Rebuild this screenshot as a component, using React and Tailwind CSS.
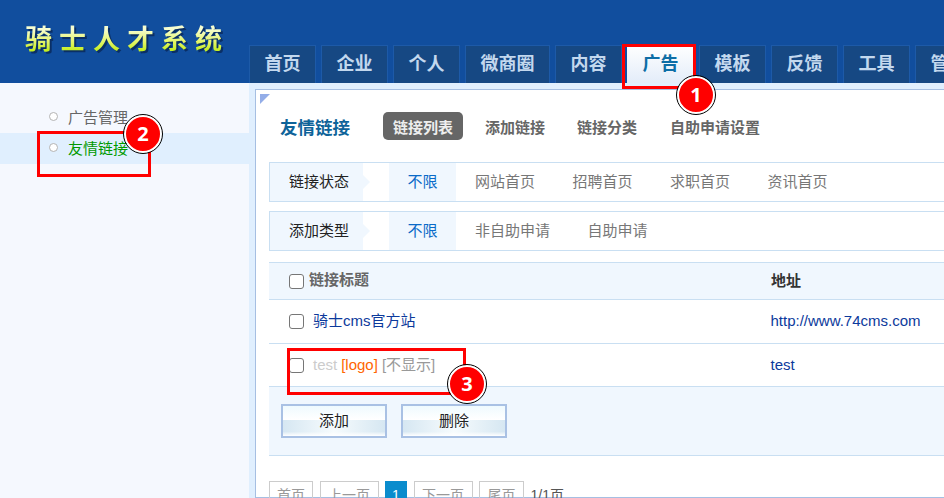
import React from 'react';

const navItems = [
  { label: '首页', width: 'w-[67px]' },
  { label: '企业', width: 'w-[67px]' },
  { label: '个人', width: 'w-[67px]' },
  { label: '微商圈', width: 'w-[85px]' },
  { label: '内容', width: 'w-[67px]' },
  { label: '广告', width: 'w-[67px]', active: true },
  { label: '模板', width: 'w-[67px]' },
  { label: '反馈', width: 'w-[67px]' },
  { label: '工具', width: 'w-[67px]' },
  { label: '管理', width: 'w-[67px]' },
];

function FilterRow({ title, options }) {
  return (
    <div className="flex h-[40px] w-[700px] border border-[#c9dff2]">
      <div className="relative flex w-[93px] items-center bg-[#f0f7fe] pl-[19px] text-[15px] text-[#222]">
        {title}
        <span className="absolute left-full top-1/2 -mt-[7px] border-y-[7px] border-l-[7px] border-y-transparent border-l-[#f0f7fe]" />
      </div>
      <div className="ml-[26px] flex">
        {options.map((o, i) => (
          <div
            key={o}
            className={i === 0
              ? 'flex w-[67px] items-center justify-center bg-[#f0f7fe] text-[15px] text-[#0a6ac8]'
              : 'flex items-center pl-[19px] pr-[18.5px] text-[15px] text-[#777]'}
          >
            {o}
          </div>
        ))}
      </div>
    </div>
  );
}

function Check() {
  return <span className="block h-[15px] w-[15px] shrink-0 rounded-[3px] border border-[#767676] bg-white" />;
}

function Marker({ n, className }) {
  return (
    <div className={`absolute flex h-[38px] w-[38px] items-center justify-center rounded-full border-2 border-white bg-[#f00] font-['Open_Sans',sans-serif] text-[20px] font-bold text-white outline outline-1 outline-black ${className}`}>
      {n}
    </div>
  );
}

function GradButton({ children }) {
  return (
    <button className="flex h-[34px] w-[106px] items-center justify-center border-2 border-[#a9c1e4] bg-[linear-gradient(180deg,#effafe_0%,#ffffff_45%,transparent_46%,transparent_85%,#ffffff_100%),linear-gradient(90deg,#d6e7f2_0%,#f6fbfd_50%,#d6e7f2_100%)] text-[15px] text-[#222]">
      {children}
    </button>
  );
}

export default function App() {
  return (
    <div className="relative h-[498px] w-[944px] overflow-hidden bg-white font-['Liberation_Sans','Noto_Sans_CJK_SC',sans-serif]">
      {/* header */}
      <div className="flex h-[83px] bg-[#114e9e]">
        <div className="w-[249px] shrink-0 pl-[25px] pt-[21px]">
          <span className="bg-[linear-gradient(180deg,#f6fdd0_15%,#e4f56a_55%,#c4ee22_85%)] bg-clip-text text-[27px] font-bold leading-[38px] tracking-[7px] text-transparent drop-shadow-[2px_2px_0_#0a2f66]">骑士人才系统</span>
        </div>
        <div className="flex items-end gap-[5px] overflow-hidden">
          {navItems.map((item) => (
            <div
              key={item.label}
              className={item.active
                ? `flex h-[38px] shrink-0 items-center justify-center bg-[linear-gradient(180deg,#ffffff,#e3ecf9)] text-[18px] font-bold text-[#0e6ea6] ${item.width}`
                : `flex h-[38px] shrink-0 items-center justify-center border border-b-0 border-[#1d5aa8] bg-[#164883] text-[18px] font-bold text-[#c3d8ee] ${item.width}`}
            >
              {item.label}
            </div>
          ))}
        </div>
      </div>

      <div className="flex h-[415px]">
        {/* sidebar */}
        <div className="w-[249px] shrink-0 bg-[#f5f8fe] pt-[19px] text-[15px]">
          <div className="flex h-[31px] items-center pl-[49px] pt-[2px] text-[#666]">
            <span className="-mt-[5px] mr-[10px] h-[9px] w-[9px] rounded-full border border-[#b4b4b4] bg-white" />
            广告管理
          </div>
          <div className="flex h-[31px] items-center bg-[#e0effe] pl-[49px] pt-[2px] text-[#009900]">
            <span className="-mt-[5px] mr-[10px] h-[9px] w-[9px] rounded-full border border-[#b4b4b4] bg-white" />
            友情链接
          </div>
        </div>

        {/* main */}
        <div className="flex-1 bg-[#e0effe] pl-[6px] pt-[6px]">
          <div className="relative h-full border-[1.5px] border-[#a6bfe2] bg-white pl-[13px]">
            <span className="absolute left-[4px] top-[4px] border-r-[10px] border-t-[10px] border-r-transparent border-t-[#93ade8]" />

            <div className="flex h-[72px] items-center pl-[11px]">
              <span className="w-[103px] pt-[5px] text-[17.5px] font-bold text-[#0e6399]">友情链接</span>
              <span className="flex h-[28px] w-[80px] items-center justify-center rounded-[5px] bg-[#666] pt-[4px] text-[15px] font-bold text-[#eee]">链接列表</span>
              <span className="ml-[22px] pt-[5px] text-[15px] font-bold text-[#666]">添加链接</span>
              <span className="ml-[32px] pt-[5px] text-[15px] font-bold text-[#666]">链接分类</span>
              <span className="ml-[33px] pt-[5px] text-[15px] font-bold text-[#666]">自助申请设置</span>
            </div>

            <FilterRow title="链接状态" options={['不限', '网站首页', '招聘首页', '求职首页', '资讯首页']} />
            <div className="mt-[9px]">
              <FilterRow title="添加类型" options={['不限', '非自助申请', '自助申请']} />
            </div>

            {/* table */}
            <div className="mt-[11px] w-[700px]">
              <div className="flex h-[38px] items-center border-y border-[#c9dff2] bg-[#f0f7fe] pl-[20px] text-[15px] font-bold text-[#666]">
                <Check />
                <span className="ml-[5px] w-[462px] pb-[2px]">链接标题</span>
                <span className="text-[#333]">地址</span>
              </div>
              <div className="flex h-[44px] items-center border-b border-[#c9dff2] pl-[20px] text-[15px]">
                <Check />
                <span className="ml-[9px] w-[457.5px] text-[#0c3a9c]">骑士cms官方站</span>
                <span className="text-[#0c3a9c]">http://www.74cms.com</span>
              </div>
              <div className="flex h-[43px] items-center border-b border-[#c9dff2] pl-[20px] text-[15px]">
                <Check />
                <span className="ml-[9px] w-[457.5px]">
                  <span className="text-[#ccc]">test</span>
                  <span className="ml-[4px] text-[#ff6600]">[logo]</span>
                  <span className="ml-[4px] text-[#999]">[不显示]</span>
                </span>
                <span className="text-[#0c3a9c]">test</span>
              </div>
              <div className="flex h-[69px] items-start gap-[14px] border-b border-[#c9dff2] bg-[#f0f7fe] pl-[12px] pt-[17px]">
                <GradButton>添加</GradButton>
                <GradButton>删除</GradButton>
              </div>
            </div>

            {/* pagination */}
            <div className="mt-[25px] flex items-start gap-[6.5px] text-[14px] text-[#999]">
              <span className="flex h-[32px] w-[44px] items-center justify-center border border-[#ccc] pb-[4px]">首页</span>
              <span className="flex h-[32px] w-[59px] items-center justify-center border border-[#ccc] pb-[4px]">上一页</span>
              <span className="flex h-[32px] w-[22px] items-center justify-center bg-[#0a8ccd] pb-[4px] text-white">1</span>
              <span className="flex h-[32px] w-[59px] items-center justify-center border border-[#ccc] pb-[4px]">下一页</span>
              <span className="flex h-[32px] w-[45px] items-center justify-center border border-[#ccc] pb-[4px]">尾页</span>
              <span className="pt-[4px] text-[#555]">1/1页</span>
            </div>
          </div>
        </div>
      </div>

      {/* annotations */}
      <div className="absolute left-[622px] top-[44px] h-[45px] w-[74px] border-[3px] border-[#f00]" />
      <Marker n="1" className="left-[677px] top-[76px]" />
      <div className="absolute left-[37px] top-[131px] h-[46px] w-[114px] border-[3px] border-[#f00]" />
      <Marker n="2" className="left-[124px] top-[115px]" />
      <div className="absolute left-[287px] top-[348px] h-[47px] w-[179px] border-[3px] border-[#f00]" />
      <Marker n="3" className="left-[448px] top-[365px]" />
    </div>
  );
}
